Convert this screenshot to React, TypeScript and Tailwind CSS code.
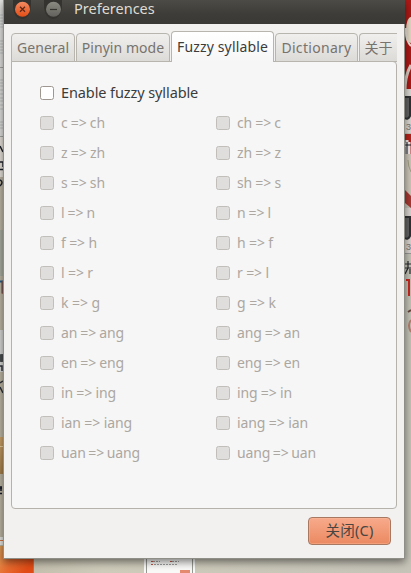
import { useState, type ReactNode } from "react";
import { clsx } from "clsx";

type Rule = {
  label: string;
  width: string;
};

const RULES: [Rule, Rule][] = [
  [{ label: "c => ch", width: "w-[44px]" }, { label: "ch => c", width: "w-[44px]" }],
  [{ label: "z => zh", width: "w-[44px]" }, { label: "zh => z", width: "w-[44px]" }],
  [{ label: "s => sh", width: "w-[44px]" }, { label: "sh => s", width: "w-[44px]" }],
  [{ label: "l => n", width: "w-[34px]" }, { label: "n => l", width: "w-[34px]" }],
  [{ label: "f => h", width: "w-[36px]" }, { label: "h => f", width: "w-[36px]" }],
  [{ label: "l => r", width: "w-[32px]" }, { label: "r => l", width: "w-[32px]" }],
  [{ label: "k => g", width: "w-[39px]" }, { label: "g => k", width: "w-[39px]" }],
  [{ label: "an => ang", width: "w-[63px]" }, { label: "ang => an", width: "w-[63px]" }],
  [{ label: "en => eng", width: "w-[63px]" }, { label: "eng => en", width: "w-[63px]" }],
  [{ label: "in => ing", width: "w-[55px]" }, { label: "ing => in", width: "w-[55px]" }],
  [{ label: "ian => iang", width: "w-[71px]" }, { label: "iang => ian", width: "w-[71px]" }],
  [{ label: "uan => uang", width: "w-[79px]" }, { label: "uang => uan", width: "w-[79px]" }],
];

const TABS = [
  { id: "general", label: "General", width: "w-[64px]", tracking: "tracking-[0.08px]" },
  { id: "pinyin", label: "Pinyin mode", width: "w-[94px]", tracking: "tracking-[0.06px]" },
  { id: "fuzzy", label: "Fuzzy syllable", width: "w-[103px]", tracking: "tracking-[0.14px]" },
  { id: "dictionary", label: "Dictionary", width: "w-[83px]", tracking: "tracking-[0.3px]" },
  { id: "about", label: "关于", width: "w-[38px]", tracking: "tracking-normal" },
];

function Desktop() {
  return (
    <svg className="absolute inset-0" width="411" height="573" viewBox="0 0 411 573">
      <defs>
        <linearGradient id="wall" x1="0" y1="0" x2="1" y2="0">
          <stop offset="0" stopColor="#c0baa8" />
          <stop offset="0.25" stopColor="#cfccbb" />
          <stop offset="1" stopColor="#c6c4b8" />
        </linearGradient>
        <linearGradient id="orange" x1="0" y1="0" x2="1" y2="0.5">
          <stop offset="0" stopColor="#e0a05a" />
          <stop offset="0.5" stopColor="#e86c30" />
          <stop offset="1" stopColor="#e24c16" />
        </linearGradient>
        <linearGradient id="tan" x1="0" y1="0" x2="0" y2="1">
          <stop offset="0" stopColor="#d0a66b" />
          <stop offset="1" stopColor="#a7824d" />
        </linearGradient>
      </defs>
      <rect width="411" height="573" fill="url(#wall)" />

      {/* left edge */}
      <rect width="4" height="136" fill="#e4e5e2" />
      <path d="M0 15h3M0 18h3M0 21h3M0 24h3M0 27h3M0 41h3M0 44h3M0 47h3M0 50h3M0 53h3M0 80h3M0 83h3M0 86h3M0 90h3M0 94h3M0 98h3M0 101h3M0 105h3M0 109h3M0 122h3M0 125h3M0 128h3" stroke="#c0c3c3" />
      <path d="M0 67.500h4M0 136.500h4" stroke="#a5a8a5" />
      <rect y="137" width="4" height="40" fill="#eae6de" />
      <path d="M0 146l3 6M0 162h3v5M0 169.500h3M0 180q4 2 0 6" stroke="#20232c" strokeWidth="1.500" fill="none" />
      <rect y="230" width="4" height="46" fill="#adb0a2" />
      <path d="M0 281.500h2.500v12" stroke="#285e86" strokeWidth="2" fill="none" />
      <path d="M3 281v13" stroke="#d35b30" />
      <rect y="330" width="4" height="42" fill="#dbdcda" />
      <circle cx="2" cy="358" r="4" fill="#4b4e50" />
      <path d="M0 366h2v5M0 383l3 -2M0 387l3 6" stroke="#30343c" strokeWidth="1.500" fill="none" />
      <rect y="437" width="4" height="37" fill="url(#tan)" />
      <path d="M0 446.500h4" stroke="#efd3a2" />
      <path d="M0 488h2M1 486v5M0 493.500h2" stroke="#171b28" strokeWidth="1.500" />
      <rect y="537" width="4" height="8" fill="#eae9e5" />
      <path d="M0 540.500h4" stroke="#d87848" />
      <rect y="546" width="33" height="27" fill="url(#orange)" />
      <path d="M33.500 559v14" stroke="#b77361" />

      {/* bottom thumbnail */}
      <rect x="144" y="559" width="51" height="14" fill="#fafaf8" />
      <path d="M146.500 559v14M192.500 559v14" stroke="#979892" />
      <rect x="151" y="561" width="2" height="1" fill="#c75745" />
      <rect x="170" y="561" width="2" height="1" fill="#c75745" />
      <rect x="151" y="564" width="2" height="1" fill="#c75745" />
      <path d="M153 561.500h7M172 561.500h7M154 564.500h24" stroke="#9e9f9e" strokeDasharray="2 1" />
      <rect x="180" y="570" width="10" height="3" fill="#e58b70" />

      {/* right edge */}
      <rect x="405" width="6" height="92" fill="#ad1916" />
      <ellipse cx="411" cy="30" rx="5" ry="13" fill="#e3d9c4" />
      <path d="M406 28q-1 12 5 18" stroke="#efe7db" strokeWidth="2" fill="none" />
      <path d="M411 65q-6 10 -6 26" stroke="#dbcfc6" strokeWidth="3" fill="none" />
      <rect x="405" y="89" width="6" height="44" fill="#dcd9d3" />
      <path d="M405 97h5v19q-2 4 -5 2" fill="#626364" stroke="#303234" strokeWidth="2" />
      <text x="406" y="130" fontSize="9" fill="#777" fontFamily="Liberation Sans">3</text>
      <rect x="405" y="134" width="6" height="20" fill="#b5231b" />
      <path d="M405 145h5M407 140v14M409 142v12" stroke="#f3eeee" strokeWidth="3" />
      <path d="M405 145h6M407 142v12" stroke="#141821" strokeWidth="1" />
      <rect x="405" y="154" width="6" height="52" fill="#cec7b9" />
      <path d="M408 160q0 6 3 12" stroke="#a3a184" fill="none" />
      <path d="M405 190l6 6v12l-6 -5z" fill="#a93933" />
      <rect x="405" y="208" width="6" height="45" fill="#dad4d0" />
      <path d="M405 217h5v19q-2 4 -5 2" fill="#626364" stroke="#303234" strokeWidth="2" />
      <text x="406" y="250" fontSize="9" fill="#777" fontFamily="Liberation Sans">3</text>
      <path d="M405 253.500h6" stroke="#999a98" />
      <path d="M405 264h6M405 268h6M408 261v7l-3 6M410 269v5" stroke="#27292e" strokeWidth="1.200" fill="none" />
      <path d="M406 280h3v16" stroke="#cd2720" strokeWidth="2" fill="none" />
      <path d="M408 312l3 -2" stroke="#69463b" strokeWidth="2" />
      <path d="M411 320q-4 5 0 12" stroke="#b97f6e" strokeWidth="2" fill="none" />
    </svg>
  );
}

function TitleBar() {
  return (
    <div className="flex h-6 w-[401px] shrink-0 items-start bg-linear-to-b from-[#4c4b46] via-[#3d3c38] via-60% to-[#3a3935]">
      <svg width="64" height="24" viewBox="0 0 64 24" className="shrink-0">
        <defs>
          <linearGradient id="close" x1="0" y1="0" x2="0" y2="1">
            <stop offset="0" stopColor="#f38a61" />
            <stop offset="1" stopColor="#e34e16" />
          </linearGradient>
          <linearGradient id="minimize" x1="0" y1="0" x2="0" y2="1">
            <stop offset="0" stopColor="#8b8a82" />
            <stop offset="1" stopColor="#62615b" />
          </linearGradient>
        </defs>
        <path d="M9 0h18v5q-1 14 -9 14t-9 -12zM40 0h18v8q-2 11 -9 11t-9 -11z" fill="#34332f" />
        <circle cx="18.500" cy="9.300" r="7.500" fill="url(#close)" />
        <path d="M16 6.800l5 5M21 6.800l-5 5" stroke="#5b291a" strokeWidth="1.300" />
        <circle cx="49.500" cy="9.300" r="7.500" fill="url(#minimize)" />
        <path d="M46 9.500h7" stroke="#35342f" strokeWidth="1.200" />
      </svg>
      <div className="ml-[6px] text-[14.500px] leading-[17px] text-[#dfdbd2]">Preferences</div>
    </div>
  );
}

type CheckRowProps = {
  checked: boolean;
  disabled?: boolean;
  onChange: () => void;
  children: ReactNode;
};

function CheckRow({ checked, disabled, onChange, children }: CheckRowProps) {
  return (
    <label className="flex h-[30px] w-44 items-center whitespace-nowrap">
      <input
        type="checkbox"
        checked={checked}
        disabled={disabled}
        onChange={onChange}
        className={clsx(
          "size-[14px] shrink-0 appearance-none rounded-[2.500px] border",
          disabled ? "border-[#c2bfbb] bg-[#dfdedc]" : "border-[#9d9790] bg-white",
          checked && "bg-[#ed764d]",
        )}
      />
      {children}
    </label>
  );
}

export default function App() {
  const [active, setActive] = useState("fuzzy");
  const [enabled, setEnabled] = useState(false);
  const [checked, setChecked] = useState<string[]>([]);

  const toggle = (label: string) =>
    setChecked((prev) => (prev.includes(label) ? prev.filter((l) => l !== label) : [...prev, label]));

  return (
    <div className="relative h-[573px] w-[411px] overflow-hidden font-['Noto_Sans','Noto_Sans_CJK_SC',sans-serif]">
      <Desktop />
      <div className="relative ml-[3px] flex h-[559px] w-[402px] flex-col border-r border-b border-l border-[#8f8e87] bg-[#f2f1f0] shadow-[0_3px_8px_rgba(0,0,0,0.5)]">
        <TitleBar />

        {/* tabs */}
        <div className="relative z-10 ml-[7px] mt-[7px] flex h-[31px] w-[386px] items-end gap-px overflow-hidden">
          {TABS.map((tab) => {
            const current = tab.id === active;
            return (
              <button
                key={tab.id}
                onClick={() => setActive(tab.id)}
                className={clsx(
                  "flex shrink-0 justify-center whitespace-nowrap border-t border-l border-[#b8b4ae] text-[14px] leading-[20px]",
                  current
                    ? "h-[31px] bg-linear-to-b from-white to-[#f6f6f6] pt-[5px] text-[#3c3c3c]"
                    : "h-[29px] border-b border-b-[#b8b4ae] bg-linear-to-b from-[#f0efed] to-[#dddbd8] pt-[4px] text-[#77736e]",
                  tab.id === "about" ? "rounded-tl-[4px]" : "rounded-t-[4px] border-r",
                  tab.width,
                  tab.tracking,
                )}
              >
                {tab.label}
              </button>
            );
          })}
        </div>

        {/* fuzzy syllable page */}
        <div className="-mt-px ml-[7px] h-[448px] w-[386px] rounded-b-[4px] rounded-tr-[4px] border border-[#b5b1ab] bg-[#f6f6f6] pl-[28px] pt-4">
          <CheckRow checked={enabled} onChange={() => setEnabled(!enabled)}>
            <span className="mb-px ml-[7px] text-[14.500px] tracking-[-0.1px] text-[#3c3c3c]">Enable fuzzy syllable</span>
          </CheckRow>
          <div className="grid grid-cols-[176px_176px]">
            {RULES.flat().map((rule) => (
              <CheckRow
                key={rule.label}
                checked={checked.includes(rule.label)}
                disabled={!enabled}
                onChange={() => toggle(rule.label)}
              >
                <span
                  className={clsx(
                    "mb-0.5 ml-[7px] flex justify-between text-[14px] tracking-[-0.1px]",
                    enabled ? "text-[#3c3c3c]" : "text-[#aca7a1]",
                    rule.width,
                  )}
                >
                  {rule.label.split(" ").map((part, i) => (
                    <span key={i}>{part}</span>
                  ))}
                </span>
              </CheckRow>
            ))}
          </div>
        </div>

        <div className="mt-2 flex justify-end pr-[13px]">
          <button className="flex h-7 w-[83px] items-center justify-center rounded-[4px] border border-[#a87861] bg-linear-to-b from-[#f7aa8b] to-[#eb8961] text-[14.500px] tracking-[0.2px] text-[#4a4541] shadow-[inset_0_0_0_1px_rgba(255,190,160,0.4)]">
            关闭(C)
          </button>
        </div>
      </div>
    </div>
  );
}
